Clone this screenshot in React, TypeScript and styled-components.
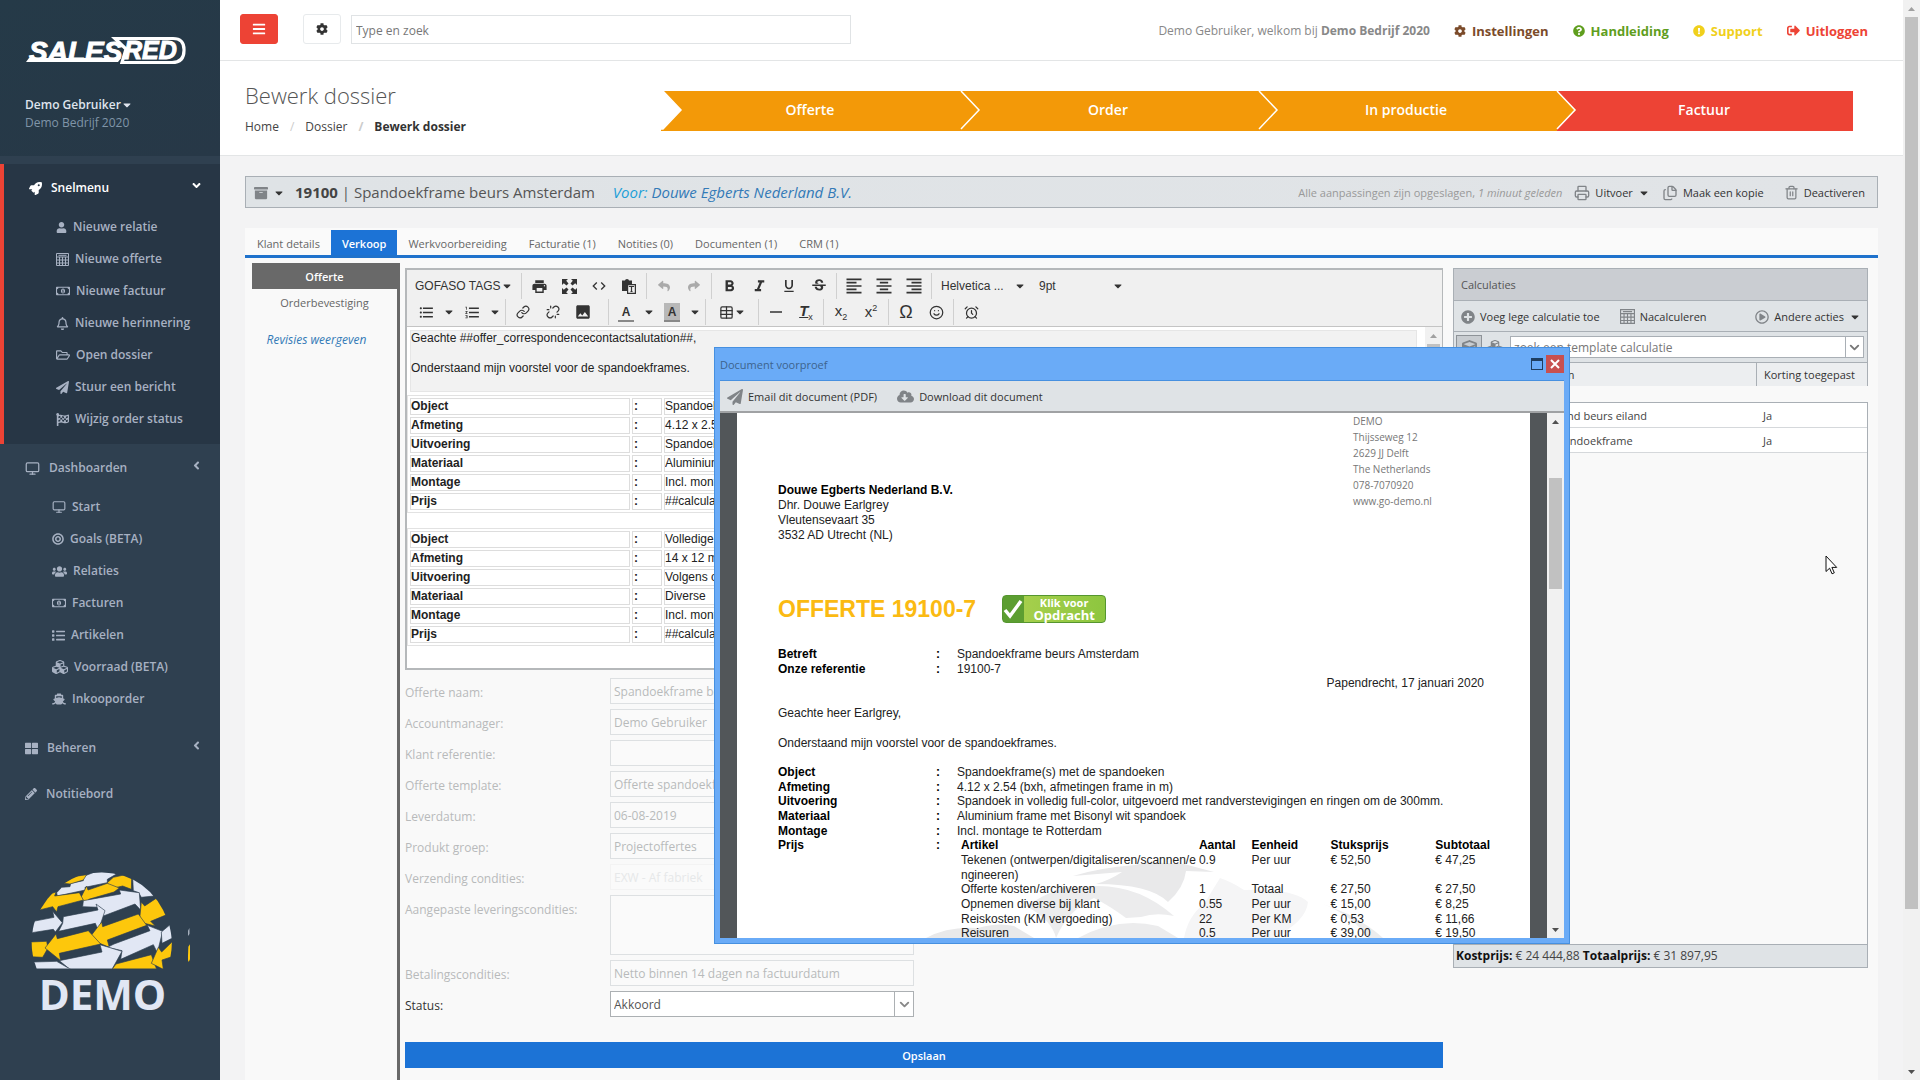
import React from "react";
import styled, { createGlobalStyle, css } from "styled-components";
import {
  FaBars, FaCog, FaQuestionCircle, FaExclamationCircle, FaSignOutAlt, FaRocket, FaUser, FaRegMoneyBillAlt,
  FaRegBell, FaRegFolderOpen, FaPaperPlane, FaFlagCheckered, FaBullseye, FaUsers, FaList, FaCube, FaCubes, FaShip,
  FaThLarge, FaPencilAlt, FaAngleDown, FaAngleLeft, FaArchive, FaPlusCircle, FaRegPlayCircle,
  FaCloudDownloadAlt, FaReply, FaShare, FaCaretDown,
} from "react-icons/fa";
import {
  MdPrint, MdCode, MdFormatBold, MdFormatItalic, MdFormatUnderlined, MdStrikethroughS,
  MdFormatAlignLeft, MdFormatAlignCenter, MdFormatAlignRight, MdFormatListBulleted, MdFormatListNumbered,
  MdImage, MdHorizontalRule,
} from "react-icons/md";
import { Unlink, Table, Smile, AlarmClock, Printer, Files, Trash2, ChevronDown, Monitor, Link } from "lucide-react";

const ui = `"Open Sans", "Noto Sans", sans-serif`;
const doc = `"Liberation Sans", Arial, sans-serif`;

const Global = createGlobalStyle`
  *, *::before, *::after { box-sizing: border-box; }
  body { margin: 0; background: #f3f3f4; color: #555; font: 12px/18px ${ui}; overflow: hidden; }
  button, input, select, textarea { font: inherit; color: inherit; margin: 0; border-radius: 0; }
  button { background: none; border: 0; padding: 0; white-space: nowrap; }
  a { color: inherit; text-decoration: none; }
  h1, h2, p, ul, ol { margin: 0; padding: 0; font-weight: inherit; font-size: inherit; }
  ul, ol { list-style: none; }
  table { border-spacing: 0; text-align: left; }
  svg { flex: none; }
`;

const Page = styled.div`
  display: flex;
  height: 100vh;
  overflow: hidden;
`;

/* ---------- sidebar ---------- */
const Sidebar = styled.nav`
  flex: 0 0 220px;
  background: #2f4050;
  color: #a7b1c2;
  font-weight: 600;
`;
const Profile = styled.div`
  height: 156px;
  padding: 36px 25px 0;
  background: linear-gradient(160deg, #253a48, #273847);
  margin-bottom: 8px;
  svg { display: block; }
`;
const UserName = styled.button`
  display: flex;
  align-items: center;
  margin-top: 30px;
  font-weight: 600;
  color: #dfe4ed;
`;
const Company = styled.div`
  font-weight: 400;
  color: #8095a8;
`;
const Section = styled.li<{ $active?: boolean }>`
  padding-bottom: ${(p) => (p.$active === undefined ? 0 : 10)}px;
  ${(p) => p.$active && css`
    background: #273645;
    box-shadow: inset 4px 0 0 #ed4335;
  `}
`;
const SectionLink = styled.a<{ $active?: boolean }>`
  display: flex;
  align-items: center;
  height: 46px;
  padding: 2px 17px 0 ${(p) => (p.$active ? 29 : 25)}px;
  color: ${(p) => (p.$active ? "#fff" : "inherit")};
  > svg:first-child { margin-right: 9px; }
  > svg:last-child { margin-left: auto; margin-top: -6px; }
`;
const SubLink = styled.a<{ $indent: number }>`
  display: flex;
  align-items: center;
  gap: 6px;
  height: 32px;
  padding: 2px 0 0 ${(p) => p.$indent}px;
`;
const Globe = styled.div`
  padding: 44px 20px;
  svg { display: block; }
`;

/* ---------- top ---------- */
const Main = styled.main`
  flex: 1;
  min-width: 0;
  background: #f3f3f4;
`;
const TopBar = styled.header`
  display: flex;
  align-items: center;
  height: 61px;
  padding: 0 35px 2px 20px;
  background: #fff;
  border-bottom: 1px solid #e3e5e6;
`;
const SquareButton = styled.button<{ $primary?: boolean }>`
  display: grid;
  place-items: center;
  width: 38px;
  height: 30px;
  border-radius: 3px;
  border: 1px solid ${(p) => (p.$primary ? "#ed4335" : "#e7eaec")};
  background: ${(p) => (p.$primary ? "#ed4335" : "#fff")};
  color: ${(p) => (p.$primary ? "#fff" : "#333")};
  margin-right: ${(p) => (p.$primary ? 25 : 10)}px;
`;
const Search = styled.input`
  width: 500px;
  height: 29px;
  padding: 2px 4px 0;
  border: 1px solid #e0e3e5;
  background: #fff;
  &::placeholder { color: #777; opacity: 1; }
`;
const Welcome = styled.span`
  margin-left: auto;
  padding-top: 3px;
  color: #888;
`;
const TopLink = styled.a<{ $color: string }>`
  display: flex;
  align-items: center;
  gap: 6px;
  margin-left: 24px;
  padding-top: 3px;
  font-size: 13px;
  font-weight: 700;
  color: ${(p) => p.$color};
`;
const Heading = styled.section`
  display: grid;
  grid-template-columns: 416px 1fr;
  height: 95px;
  padding: 18px 50px 0 25px;
  background: #fff;
  border-bottom: 1px solid #e3e5e6;
`;
const Title = styled.h1`
  font-size: 22px;
  line-height: 32px;
  font-weight: 300;
  color: #555;
`;
const Crumbs = styled.ol`
  display: flex;
  margin-top: 7px;
  color: #444;
  li + li::before { content: "/"; padding: 0 11px; color: #ccc; }
  li:last-child { font-weight: 700; color: #333; }
`;
const Steps = styled.ol`
  display: grid;
  grid-template-columns: repeat(4, 1fr);
  height: 40px;
  margin-top: 12px;
  color: #fff;
  font-size: 14px;
  font-weight: 600;
`;
const Step = styled.li<{ $bg: string }>`
  display: grid;
  grid-template-columns: 22px 1fr 22px;
  background: ${(p) => p.$bg};
  line-height: 38px;
  text-align: center;
`;

/* ---------- dossier ---------- */
const Content = styled.div`
  padding: 20px 25px 0;
`;
const DossierBar = styled.div`
  display: flex;
  align-items: center;
  height: 32px;
  padding: 0 12px 0 8px;
  border: 1px solid #a9afb5;
  background: linear-gradient(90deg, #dfe3e6, #e1e4e7);
  font-size: 11px;
  color: #333;
`;
const DossierTitle = styled.div`
  margin-left: 10px;
  font-size: 15px;
  color: #555;
  b { color: #444; }
  i { margin-left: 14px; color: #1c9fd8; }
  a { color: #337ab7; }
`;
const Saved = styled.span`
  margin-left: auto;
  padding-top: 1px;
  color: #999;
`;
const BarButton = styled.button<{ $gap?: number }>`
  display: flex;
  align-items: center;
  gap: 5px;
  margin-left: ${(p) => p.$gap ?? 12}px;
  padding-top: 1px;
  font-size: 11px;
  color: #333;
  > svg:first-child { color: #808488; }
`;
const Tabs = styled.div`
  display: flex;
  align-items: flex-end;
  height: 30px;
  margin-top: 20px;
  padding: 0 1px;
  background: #fafafa;
  border-bottom: 3px solid #1f72cc;
  font-size: 11px;
`;
const Tab = styled.button<{ $active?: boolean }>`
  height: 25px;
  padding: 3px 11px 0;
  font-weight: ${(p) => (p.$active ? 600 : 400)};
  background: ${(p) => (p.$active ? "#1c73d6" : "transparent")};
  color: ${(p) => (p.$active ? "#fff" : "#666")};
`;
const Workspace = styled.div`
  display: grid;
  grid-template-columns: 148px minmax(0, 1fr) 415px;
  height: 900px;
  padding: 5px 10px 0 7px;
  background: #f9f9f9;
`;
const SideTabs = styled.div`
  display: flex;
  flex-direction: column;
  border-right: 3px solid #696969;
  font-size: 11px;
  text-align: center;
`;
const SideTab = styled.button<{ $active?: boolean }>`
  height: 26px;
  font-size: 11px;
  margin-right: ${(p) => (p.$active ? -3 : 0)}px;
  padding: 2px ${(p) => (p.$active ? 3 : 0)}px 0 0;
  font-weight: ${(p) => (p.$active ? 600 : 400)};
  background: ${(p) => (p.$active ? "#696969" : "transparent")};
  color: ${(p) => (p.$active ? "#fff" : "#666")};
`;
const Revisions = styled.a`
  margin-top: 16px;
  font-size: 12px;
  padding-right: 16px;
  font-style: italic;
  color: #337ab7;
`;

/* ---------- editor ---------- */
const Center = styled.div`
  padding: 5px 10px 0 5px;
`;
const Editor = styled.div`
  height: 402px;
  border: 2px solid #b5b8ba;
  border-right-width: 1px;
  background: #fff;
  overflow: hidden;
  color: #222;
`;
const Toolbar = styled.div`
  height: 57px;
  padding: 3px 0 0 2px;
  background: #f0f0f0;
  border-bottom: 1px solid #c4c4c4;
  font: 12px/18px ${doc};
  color: #333;
`;
const ToolRow = styled.div`
  display: flex;
  height: 26px;
`;
const ToolGroup = styled.div<{ $end?: number }>`
  display: flex;
  align-items: center;
  padding: 0 ${(p) => p.$end ?? 2}px 0 2px;
  & + & { border-left: 1px solid #d0d0d0; }
`;
const Tool = styled.button<{ $w?: number; $dim?: boolean; $start?: number }>`
  display: flex;
  align-items: center;
  justify-content: ${(p) => (p.$start === undefined ? "center" : "space-between")};
  padding: 0 ${(p) => (p.$start === undefined ? 0 : 6)}px 0 ${(p) => p.$start ?? 0}px;
  width: ${(p) => p.$w ?? 30}px;
  height: 24px;
  color: ${(p) => (p.$dim ? "#aaa" : "#333")};
`;
const Glyph = styled.span<{ $big?: boolean }>`
  font-size: ${(p) => (p.$big ? 18 : 15)}px;
  line-height: 18px;
  sub, sup { font-size: 9px; line-height: 9px; }
  i { font-weight: 700; text-decoration: underline; }
`;
const Letter = styled.span<{ $fill?: boolean }>`
  width: 16px;
  height: 19px;
  font-weight: 700;
  text-align: center;
  border-bottom: 2px solid #888;
  background: ${(p) => (p.$fill ? "#b8b8b8" : "none")};
`;
const EditorBody = styled.div`
  display: flex;
  justify-content: space-between;
  font: 12px/14px ${doc};
`;
const EditorText = styled.div`
  flex: 1;
`;
const Intro = styled.div`
  margin: 3px 8px 3px 3px;
  height: 62px;
  line-height: 15px;
  background: #f2f2f2;
  border: 1px solid #e6e6e6;
`;
const SpecTable = styled.table`
  width: 100%;
  table-layout: fixed;
  border: 1px solid #e2e2e2;
  border-spacing: 2px;
  margin-bottom: 15px;
  td, th { border: 1px solid #ddd; height: 17px; padding: 0; line-height: 15px; overflow: hidden; white-space: nowrap; }
  tr > :nth-child(1) { width: 220px; }
  tr > :nth-child(2) { width: 30px; font-weight: 700; padding-left: 1px; }
`;

/* ---------- form ---------- */
const Form = styled.form`
  display: grid;
  grid-template-columns: 205px 304px;
  row-gap: 5px;
  margin-top: 8px;
  color: #b8babb;
`;
const Label = styled.label<{ $strong?: boolean }>`
  line-height: 29px;
  height: 26px;
  color: ${(p) => (p.$strong ? "#333" : "inherit")};
`;
const fieldStyle = css`
  width: 100%;
  height: 26px;
  padding: 0 3px;
  border: 1px solid #dde0e2;
  background: #fafafa;
`;
const Field = styled.input<{ $faded?: boolean }>`
  ${fieldStyle}
  ${(p) => p.$faded && css`color: #e6e8e9; border-color: #f3f3f3;`}
`;
const Area = styled.textarea`
  ${fieldStyle}
  display: block;
  height: 60px;
  resize: none;
`;
const SelectBox = styled.div`
  display: grid;
  grid-template-columns: 1fr 18px;
  align-items: center;
  height: 26px;
  border: 1px solid #acb0b3;
  background: #fff;
  color: #555;
  svg { grid-area: 1 / 2; justify-self: center; pointer-events: none; }
  select {
    grid-area: 1 / 1 / 2 / 3;
    height: 24px;
    padding: 1px 3px 0;
    border: 0;
    appearance: none;
    background: linear-gradient(#acb0b3, #acb0b3) no-repeat right 18px top / 1px 24px;
  }
`;
const Save = styled.button`
  width: 100%;
  height: 26px;
  margin-top: 25px;
  padding-top: 1px;
  background: #1c73d6;
  color: #fff;
  font-size: 11px;
  font-weight: 600;
`;

/* ---------- calculations ---------- */
const Calc = styled.section`
  display: flex;
  flex-direction: column;
  margin-top: 5px;
  height: 700px;
  font-size: 11px;
  color: #444;
`;
const CalcHead = styled.h2`
  height: 33px;
  padding: 0 7px;
  line-height: 31px;
  border: 1px solid #a9afb5;
  background: #cacdd2;
  color: #555;
`;
const CalcTools = styled.div`
  display: flex;
  align-items: center;
  height: 31px;
  padding: 0 6px 0 7px;
  border: solid #a9afb5;
  border-width: 0 1px 1px;
  background: #dfe3e6;
`;
const CalcSearch = styled.div`
  display: flex;
  align-items: center;
  height: 31px;
  padding: 0 3px 0 2px;
  border: solid #a9afb5;
  border-width: 0 1px 1px;
  background: #dfe3e6;
  font-size: 12px;
`;
const ModeButton = styled.button<{ $on?: boolean }>`
  display: grid;
  place-items: center;
  width: 26px;
  height: 24px;
  color: #808488;
  border: 1px solid ${(p) => (p.$on ? "#8e9398" : "transparent")};
  background: ${(p) => (p.$on ? "#c8ccd0" : "transparent")};
`;
const Combo = styled.div`
  display: flex;
  flex: 1;
  height: 22px;
  margin-left: 2px;
  border: 1px solid #a9afb5;
  background: #fff;
  input { flex: 1; min-width: 0; border: 0; padding: 1px 3px 0; background: none; }
  input::placeholder { color: #777; opacity: 1; }
  button { display: grid; place-items: center; width: 18px; border-left: 1px solid #a9afb5; color: #777; }
`;
const CalcTable = styled.table`
  width: 100%;
  table-layout: fixed;
  tr > :nth-child(1) { width: 90px; }
  tr > :nth-child(3) { width: 111px; }
`;
const HeadTable = styled(CalcTable)`
  height: 23px;
  background: #eceef0;
  border: solid #a9afb5;
  border-width: 0 1px;
  margin-bottom: 16px;
  th { font-weight: 400; padding: 0 0 0 7px; color: #333; }
  th:nth-child(3) { border-left: 1px solid #a9afb5; }
`;
const CalcList = styled.div`
  flex: 1;
  border: 1px solid #a9afb5;
  border-bottom: 0;
  td { height: 25px; padding: 1px 7px 0; background: #fff; border-bottom: 1px solid #d5d8db; }
`;
const Totals = styled.div`
  height: 24px;
  padding: 0 2px;
  font-size: 12px;
  line-height: 22px;
  border: 1px solid #a9afb5;
  background: #dfe3e6;
  b { color: #111; }
`;

/* ---------- preview window ---------- */
const Dialog = styled.section`
  position: absolute;
  left: 714px;
  top: 347px;
  display: flex;
  flex-direction: column;
  width: 856px;
  height: 597px;
  padding: 0 5px 5px;
  border: 1px solid #4690e0;
  background: #6aabf7;
  font-size: 11px;
  color: #333;
`;
const DialogHead = styled.header`
  display: flex;
  align-items: center;
  gap: 3px;
  height: 32px;
  color: #3d638d;
  h2 { flex: 1; padding-top: 1px; }
`;
const MaxButton = styled.button`
  width: 12px;
  height: 12px;
  border: 1px solid #1f3e60;
  border-top-width: 3px;
`;
const CloseButton = styled.button`
  display: grid;
  place-items: center;
  width: 18px;
  height: 18px;
  background: #c75050;
`;
const DialogTools = styled.div`
  display: flex;
  align-items: center;
  height: 33px;
  padding-left: 7px;
  border-top: 1px solid #4690e0;
  border-bottom: 2px solid #a0a2a4;
  background: #dfe3e6;
`;
const Viewer = styled.div`
  display: flex;
  flex: 1;
  min-height: 0;
  padding-left: 17px;
  background: #525659;
`;
const Sheet = styled.article`
  position: relative;
  flex: 1;
  min-width: 0;
  margin-right: 17px;
  padding: 0 40px 0 41px;
  overflow: hidden;
  background: #fff;
  font: 12px/15px ${doc};
  color: #222;
  > * { position: relative; }
  b, th { color: #000; font-weight: 700; }
`;
const Watermark = styled.svg`
  && { position: absolute; }
  left: 181px;
  bottom: 0;
`;
const Sender = styled.address`
  height: 70px;
  padding-left: 575px;
  font: normal 10px/16px ${ui};
  white-space: nowrap;
  color: #777;
`;
const Address = styled.p`
  line-height: 15px;
`;
const OfferRow = styled.div`
  display: flex;
  align-items: center;
  gap: 26px;
  height: 28px;
  margin: 52px 0 24px;
`;
const OfferTitle = styled.h2`
  font-size: 23px;
  line-height: 28px;
  font-weight: 700;
  color: #fbba12;
`;
const OrderButton = styled.button`
  display: flex;
  align-items: center;
  width: 104px;
  height: 28px;
  border: 1px solid #55962f;
  border-radius: 4px;
  background: linear-gradient(90deg, #5c9e31 21px, #a5cf4c 21px, #8dc63f);
  color: #fff;
  font: 700 13px/12px ${ui};
  text-align: center;
  span { flex: 1; }
  small { display: block; font-size: 11px; line-height: 12px; }
`;
const DocTable = styled.table`
  width: 100%;
  line-height: 15px;
  td, th { padding: 0; vertical-align: top; height: 15px; white-space: nowrap; }
  tr:nth-child(3n + 2) > :nth-child(n) { height: 14px; line-height: 14px; }
  tr > :nth-child(1) { width: 158px; }
  tr > :nth-child(2) { width: 21px; font-weight: 700; color: #000; }
`;
const DateLine = styled.p`
  text-align: right;
  padding-right: 6px;
`;
const Letterline = styled.p`
  margin: 15px 0 14px;
`;
const PriceTable = styled.table`
  margin-left: 4px;
  && td, && th { height: 15px; line-height: 15px; }
  &&& tbody tr:nth-child(3n + 2) td { height: 14px; line-height: 14px; }
  && tr > :nth-child(n) { font-weight: 400; color: inherit; }
  && thead tr > :nth-child(n) { font-weight: 700; color: #000; }
  && tr > :nth-child(1) { width: 238px; }
  && tr > :nth-child(2) { width: 53px; }
  && tr > :nth-child(3) { width: 80px; }
  && tr > :nth-child(4) { width: 106px; }
`;

/* ---------- scrollbars ---------- */
const Track = styled.div`
  display: flex;
  flex-direction: column;
  align-items: center;
  flex: 0 0 17px;
  background: #f1f1f1;
`;
const Space = styled.div<{ $h?: number }>`
  flex: ${(p) => (p.$h === undefined ? "1" : `0 0 ${p.$h}px`)};
`;
const Thumb = styled.div<{ $h: number }>`
  width: 13px;
  height: ${(p) => p.$h}px;
  background: #c1c1c1;
`;
const Pointer = styled.svg`
  position: absolute;
  left: 1825px;
  top: 555px;
`;

const Arrow = ({ down, color = "#505050" }: { down?: boolean; color?: string }) => (
  <svg width="17" height="17" viewBox="0 0 17 17">
    <path d={down ? "M5 7h7l-3.500 4z" : "M5 11h7l-3.500-4z"} fill={color} />
  </svg>
);

const CalcIcon = ({ size = 13 }: { size?: number }) => (
  <svg width={size} height={size} viewBox="0 0 13 13" fill="none" stroke="currentColor">
    <path d="M.5.5h12v12H.500zM.500 4h12M.500 7h12M.500 10h12M3.500 4v9M6.500 4v9M9.500 4v9M2.500 2.300h8" />
  </svg>
);

const ExpandIcon = () => (
  <svg width="15" height="15" viewBox="0 0 15 15" fill="#333">
    <path d="M0 0h6L4.200 1.800 6.500 4.500 4.500 6.500 1.800 4.200 0 6zM15 0v6l-1.800-1.800-2.700 2.300-2-2 2.300-2.700L9 0zM0 15V9l1.800 1.800 2.700-2.300 2 2-2.300 2.700L6 15zM15 15H9l1.800-1.800-2.300-2.700 2-2 2.700 2.300L15 9z" />
  </svg>
);

const PasteIcon = () => (
  <svg width="14" height="15" viewBox="0 0 14 15">
    <path d="M0 1.500h3a2 1.500 0 0 1 4 0h3V5H5v7H0z" fill="#333" />
    <path d="M5.600 5.600h7.800v8.800H5.600zM7.500 8V7.500h4V8M9.500 7.500v5M8.500 12.500h2" fill="none" stroke="#333" strokeWidth="1.200" />
  </svg>
);

const Caret = () => <FaCaretDown size={12} />;

const Logo = () => (
  <svg width="162" height="30" viewBox="0 0 162 30" role="img" aria-label="SalesRed">
    <path d="M1 26 L4 22 H96 L93 26Z" fill="#fff" />
    <path d="M90 2.500H148q11 0 11 11v1q0 12-12 12H97L101 13Z" fill="none" stroke="#fff" strokeWidth="3.200" />
    <g fill="#fff" fontFamily="Liberation Sans, Arial, sans-serif" fontWeight="700" fontStyle="italic">
      <text x="4" y="25" fontSize="28" stroke="#fff">SALES</text>
      <text x="99" y="23" fontSize="25" stroke="#fff">RED</text>
    </g>
  </svg>
);

const GlobeLogo = () => (
  <svg width="180" height="164" viewBox="0 0 540 492" role="img" aria-label="Demo">
    <defs>
      <clipPath id="dome"><path d="M50 326Q20 245 48 175Q110 40 245 37Q390 42 445 185Q468 260 440 326Z" /></clipPath>
    </defs>
    <g clipPath="url(#dome)" stroke="#2f4050" strokeWidth="2">
      <path fill="#e1e7f4" d="M110 98L125 82L150 80L152 70L190 62L188 50L240 30L310 30L262 58L262 68L195 82L196 90L112 108Z" />
      <path fill="#fdc70c" d="M130 70L160 50L200 44L190 60L150 72Z" />
      <path fill="#fdc70c" d="M262 68L280 52L325 42L335 54L334 88L308 78L282 84L278 92Z" />
      <path fill="#fdc70c" d="M180 118L200 78L204 90L262 70L298 84L282 96L206 118L208 130Z" />
      <path fill="#fdc70c" d="M50 135L80 105L108 96L104 108L178 98L190 120L114 140L110 156L98 140L50 152Z" />
      <path fill="#e1e7f4" d="M338 52L375 66L402 108L364 112L356 98L340 92Z" />
      <path fill="#e1e7f4" d="M190 122L302 102L298 90L358 98L362 150L345 132L250 168L240 142L188 140Z" />
      <path fill="#fdc70c" d="M358 186L364 126L374 138L416 110L450 160L392 184L406 198Z" />
      <path fill="#e1e7f4" d="M40 184L102 172L98 154L127 188L106 216L100 208L36 218Z" />
      <path fill="#e1e7f4" d="M130 170L234 150L228 132L255 152L235 212L226 190L116 214L128 190Z" />
      <path fill="#fdc70c" d="M206 236L245 186L248 200L355 162L380 196L262 240L268 262Z" />
      <path fill="#e1e7f4" d="M282 252L390 212L382 196L428 214L412 278L400 254L302 298L306 272L262 262Z" />
      <path fill="#fdc70c" d="M28 246L80 244L84 264L68 292L30 290Z" />
      <path fill="#fdc70c" d="M75 264L108 222L112 236L205 212L242 252L118 280L122 302Z" />
      <path fill="#e1e7f4" d="M118 302L246 276L240 254L306 274L276 328H150Z" />
      <path fill="#e1e7f4" d="M40 306L110 304L152 328H40Z" />
      <path fill="#fdc70c" d="M276 328L288 312L394 284L410 328Z" />
      <path fill="#e1e7f4" d="M424 216L455 190L462 232L426 250Z" />
      <path fill="#fdc70c" d="M394 310L415 262L425 276L460 242L456 290L426 300L430 328Z" />
    </g>
    <path fill="#fdc70c" d="M505 260l5-7v45q-7 18-6-10z" />
    <path fill="#e1e7f4" d="M505 212l3-8v18l-3 6z" />
    <text x="56" y="449" fontFamily={ui} fontWeight="700" fontSize="126" fill="#e1e7f4">DEMO</text>
  </svg>
);

const quick = [
  [FaUser, "Nieuwe relatie", 11], [CalcIcon, "Nieuwe offerte", 13], [FaRegMoneyBillAlt, "Nieuwe factuur", 14], [FaRegBell, "Nieuwe herinnering", 13],
  [FaRegFolderOpen, "Open dossier", 14], [FaPaperPlane, "Stuur een bericht", 13], [FaFlagCheckered, "Wijzig order status", 13],
] as const;
const boards = [
  [Monitor, "Start", 14], [FaBullseye, "Goals (BETA)", 12], [FaUsers, "Relaties", 15], [FaRegMoneyBillAlt, "Facturen", 14],
  [FaList, "Artikelen", 13], [FaCubes, "Voorraad (BETA)", 16], [FaShip, "Inkooporder", 14],
] as const;

const specs = [
  ["Spandoekframe(s) met de spandoeken", "4.12 x 2.54 (bxh, afmetingen frame in m)", "Spandoek in volledig full-color", "Aluminium frame met Bisonyl wit spandoek", "Incl. montage te Rotterdam", "##calculation##"],
  ["Volledige beurs eiland", "14 x 12 meter", "Volgens ontwerp", "Diverse", "Incl. montage", "##calculation##"],
];
const specNames = ["Object", "Afmeting", "Uitvoering", "Materiaal", "Montage", "Prijs"];

const fields: [string, string][] = [
  ["Offerte naam:", "Spandoekframe beurs Amsterdam"], ["Accountmanager:", "Demo Gebruiker"], ["Klant referentie:", ""],
  ["Offerte template:", "Offerte spandoekframe"], ["Leverdatum:", "06-08-2019"], ["Produkt groep:", "Projectoffertes"],
  ["Verzending condities:", "EXW - Af fabriek"],
];

const prices = [
  ["Tekenen (ontwerpen/digitaliseren/scannen/e", "0.9", "Per uur", "€ 52,50", "€ 47,25"],
  ["ngineeren)", "", "", "", ""],
  ["Offerte kosten/archiveren", "1", "Totaal", "€ 27,50", "€ 27,50"],
  ["Opnemen diverse bij klant", "0.55", "Per uur", "€ 15,00", "€ 8,25"],
  ["Reiskosten (KM vergoeding)", "22", "Per KM", "€ 0,53", "€ 11,66"],
  ["Reisuren", "0.5", "Per uur", "€ 39,00", "€ 19,50"],
];

const steps: [string, string][] = [["Offerte", "#f39908"], ["Order", "#f39908"], ["In productie", "#f39908"], ["Factuur", "#ed4335"]];

const Split = ({ children, label }: { children: React.ReactNode; label: string }) => (
  <>
    <Tool aria-label={label}>{children}</Tool>
    <Tool $w={16} aria-label={`${label} opties`}><Caret /></Tool>
  </>
);

export default function App() {
  return (
    <Page>
      <Global />
      <Sidebar>
        <Profile>
          <Logo />
          <UserName>Demo Gebruiker<Caret /></UserName>
          <Company>Demo Bedrijf 2020</Company>
        </Profile>
        <ul>
          <Section $active>
            <SectionLink $active href="#snel"><FaRocket size={13} />Snelmenu<FaAngleDown size={13} /></SectionLink>
            {quick.map(([Icon, text, size]) => <SubLink $indent={56} href="#" key={text}><Icon size={size} />{text}</SubLink>)}
          </Section>
          <Section $active={false}>
            <SectionLink href="#dash"><Monitor size={15} />Dashboarden<FaAngleLeft size={13} /></SectionLink>
            {boards.map(([Icon, text, size]) => <SubLink $indent={52} href="#" key={text}><Icon size={size} />{text}</SubLink>)}
          </Section>
          <Section><SectionLink href="#beheren"><FaThLarge size={13} />Beheren<FaAngleLeft size={13} /></SectionLink></Section>
          <Section><SectionLink href="#notities"><FaPencilAlt size={12} /><span>Notitiebord</span></SectionLink></Section>
        </ul>
        <Globe><GlobeLogo /></Globe>
      </Sidebar>

      <Main>
        <TopBar>
          <SquareButton $primary aria-label="Menu"><FaBars size={14} /></SquareButton>
          <SquareButton aria-label="Opties"><FaCog size={12} /></SquareButton>
          <Search aria-label="Zoeken" placeholder="Type en zoek" />
          <Welcome>Demo Gebruiker, welkom bij <b>Demo Bedrijf 2020</b></Welcome>
          <TopLink href="#" $color="#7b4b2a"><FaCog size={12} />Instellingen</TopLink>
          <TopLink href="#" $color="#5f9e1e"><FaQuestionCircle size={12} />Handleiding</TopLink>
          <TopLink href="#" $color="#f0d01c"><FaExclamationCircle size={12} />Support</TopLink>
          <TopLink href="#" $color="#ed4335"><FaSignOutAlt size={13} />Uitloggen</TopLink>
        </TopBar>
        <Heading>
          <div>
            <Title>Bewerk dossier</Title>
            <Crumbs><li><a href="#">Home</a></li><li><a href="#">Dossier</a></li><li>Bewerk dossier</li></Crumbs>
          </div>
          <Steps>
            {steps.map(([name, color], i) => (
              <Step key={name} $bg={color}>
                <svg width="22" height="40" viewBox="0 0 22 40">
                  {i > 0 && <path d="M0 0h2l19 19L2 38v2H0z" fill="#f39908" />}
                  <path d={i ? "M2 0l18 19L2 38" : "M0 0h2l18 19L2 38H0z"} fill={i ? "none" : "#fff"} stroke="#fff" strokeWidth="1.500" />
                </svg>
                {name}
              </Step>
            ))}
          </Steps>
        </Heading>

        <Content>
          <DossierBar>
            <BarButton $gap={0} aria-label="Dossier acties"><FaArchive size={14} /><Caret /></BarButton>
            <DossierTitle><b>19100</b> | Spandoekframe beurs Amsterdam <i>Voor: <a href="#">Douwe Egberts Nederland B.V.</a></i></DossierTitle>
            <Saved>Alle aanpassingen zijn opgeslagen, <i>1 minuut geleden</i></Saved>
            <BarButton><Printer size={16} />Uitvoer<Caret /></BarButton>
            <BarButton><Files size={16} />Maak een kopie</BarButton>
            <BarButton $gap={20}><Trash2 size={15} />Deactiveren</BarButton>
          </DossierBar>
          <Tabs>
            {["Klant details", "Verkoop", "Werkvoorbereiding", "Facturatie (1)", "Notities (0)", "Documenten (1)", "CRM (1)"].map((t) => (
              <Tab key={t} $active={t === "Verkoop"}>{t}</Tab>
            ))}
          </Tabs>
          <Workspace>
            <SideTabs>
              <SideTab $active>Offerte</SideTab>
              <SideTab>Orderbevestiging</SideTab>
              <Revisions href="#">Revisies weergeven</Revisions>
            </SideTabs>

            <Center>
              <Editor>
                <Toolbar>
                  <ToolRow>
                    <ToolGroup><Tool $w={108} $start={4}>GOFASO TAGS<Caret /></Tool></ToolGroup>
                    <ToolGroup>
                      <Tool aria-label="Print"><MdPrint size={17} /></Tool>
                      <Tool aria-label="Volledig scherm"><ExpandIcon /></Tool>
                      <Tool aria-label="Broncode"><MdCode size={16} /></Tool>
                      <Tool aria-label="Plakken"><PasteIcon /></Tool>
                    </ToolGroup>
                    <ToolGroup>
                      <Tool $dim aria-label="Ongedaan maken"><FaReply size={12} /></Tool>
                      <Tool $dim aria-label="Opnieuw"><FaShare size={12} /></Tool>
                    </ToolGroup>
                    <ToolGroup>
                      <Tool aria-label="Vet"><MdFormatBold size={19} /></Tool>
                      <Tool aria-label="Cursief"><MdFormatItalic size={19} /></Tool>
                      <Tool aria-label="Onderstrepen"><MdFormatUnderlined size={16} /></Tool>
                      <Tool aria-label="Doorhalen"><MdStrikethroughS size={18} /></Tool>
                    </ToolGroup>
                    <ToolGroup>
                      <Tool aria-label="Links"><MdFormatAlignLeft size={20} /></Tool>
                      <Tool aria-label="Midden"><MdFormatAlignCenter size={20} /></Tool>
                      <Tool aria-label="Rechts"><MdFormatAlignRight size={20} /></Tool>
                    </ToolGroup>
                    <ToolGroup>
                      <Tool $w={98} $start={7}>Helvetica ...<Caret /></Tool>
                      <Tool $w={98} $start={7}>9pt<Caret /></Tool>
                    </ToolGroup>
                  </ToolRow>
                  <ToolRow>
                    <ToolGroup>
                      <Split label="Lijst"><MdFormatListBulleted size={17} /></Split>
                      <Split label="Genummerde lijst"><MdFormatListNumbered size={17} /></Split>
                    </ToolGroup>
                    <ToolGroup $end={10}>
                      <Tool aria-label="Link"><Link size={14} /></Tool>
                      <Tool aria-label="Link verwijderen"><Unlink size={14} /></Tool>
                      <Tool aria-label="Afbeelding"><MdImage size={18} /></Tool>
                    </ToolGroup>
                    <ToolGroup $end={2}>
                      <Split label="Tekstkleur"><Letter>A</Letter></Split>
                      <Split label="Achtergrondkleur"><Letter $fill>A</Letter></Split>
                    </ToolGroup>
                    <ToolGroup>
                      <Tool $w={48} aria-label="Tabel"><Table size={15} /><Caret /></Tool>
                    </ToolGroup>
                    <ToolGroup>
                      <Tool aria-label="Lijn"><MdHorizontalRule size={18} /></Tool>
                      <Tool aria-label="Opmaak wissen"><Glyph><i>T</i><sub>x</sub></Glyph></Tool>
                    </ToolGroup>
                    <ToolGroup>
                      <Tool><Glyph>x<sub>2</sub></Glyph></Tool>
                      <Tool><Glyph>x<sup>2</sup></Glyph></Tool>
                    </ToolGroup>
                    <ToolGroup>
                      <Tool><Glyph $big>Ω</Glyph></Tool>
                      <Tool aria-label="Emoji"><Smile size={15} /></Tool>
                    </ToolGroup>
                    <ToolGroup><Tool aria-label="Tijd"><AlarmClock size={15} /></Tool></ToolGroup>
                  </ToolRow>
                </Toolbar>
                <EditorBody>
                  <EditorText>
                    <Intro>Geachte ##offer_correspondencecontactsalutation##,<br /><br />Onderstaand mijn voorstel voor de spandoekframes.</Intro>
                    {specs.map((values, t) => (
                      <SpecTable key={t}><tbody>
                        {values.map((v, i) => <tr key={i}><th>{specNames[i]}</th><td>:</td><td>{v}</td></tr>)}
                      </tbody></SpecTable>
                    ))}
                  </EditorText>
                  <Track><Arrow color="#a0a0a0" /><Thumb $h={180} /><Space /></Track>
                </EditorBody>
              </Editor>

              <Form>
                {fields.map(([label, value], i) => (
                  <React.Fragment key={label}>
                    <Label htmlFor={`f${i}`}>{label}</Label>
                    <Field id={`f${i}`} defaultValue={value} readOnly $faded={i === 6} />
                  </React.Fragment>
                ))}
                <Label htmlFor="lev">Aangepaste leveringscondities:</Label>
                <Area id="lev" readOnly />
                <Label htmlFor="bet">Betalingscondities:</Label>
                <Field id="bet" readOnly defaultValue="Netto binnen 14 dagen na factuurdatum" />
                <Label $strong htmlFor="status">Status:</Label>
                <SelectBox>
                  <select id="status"><option>Akkoord</option></select>
                  <ChevronDown size={15} strokeWidth={3} color="#888" />
                </SelectBox>
              </Form>
              <Save>Opslaan</Save>
            </Center>

            <Calc>
              <CalcHead>Calculaties</CalcHead>
              <CalcTools>
                <BarButton $gap={0}><FaPlusCircle size={14} />Voeg lege calculatie toe</BarButton>
                <BarButton $gap={20}><CalcIcon size={15} />Nacalculeren</BarButton>
                <Space />
                <BarButton><FaRegPlayCircle size={14} />Andere acties<Caret /></BarButton>
              </CalcTools>
              <CalcSearch>
                <ModeButton $on aria-label="Product"><FaCube size={15} /></ModeButton>
                <ModeButton aria-label="Producten"><FaCubes size={16} /></ModeButton>
                <Combo>
                  <input aria-label="Template calculatie" placeholder="zoek een template calculatie" />
                  <button aria-label="Openen"><ChevronDown size={15} strokeWidth={3} /></button>
                </Combo>
              </CalcSearch>
              <HeadTable as="table"><thead><tr><th /><th>Item</th><th>Korting toegepast</th></tr></thead></HeadTable>
              <CalcList>
                <CalcTable><tbody>
                  <tr><td /><td>Stand beurs eiland</td><td>Ja</td></tr>
                  <tr><td /><td>Spandoekframe</td><td>Ja</td></tr>
                </tbody></CalcTable>
              </CalcList>
              <Totals><b>Kostprijs:</b> € 24 444,88 <b>Totaalprijs:</b> € 31 897,95</Totals>
            </Calc>
          </Workspace>
        </Content>
      </Main>

      <Track><Arrow color="#a0a0a0" /><Thumb $h={892} /><Space /><Arrow down /></Track>

      <Dialog role="dialog" aria-label="Document voorproef">
        <DialogHead>
          <h2>Document voorproef</h2>
          <MaxButton aria-label="Maximaliseren" />
          <CloseButton aria-label="Sluiten">
            <svg width="10" height="10" viewBox="0 0 10 10" stroke="#fff" strokeWidth="2"><path d="M1 1l8 8M9 1l-8 8" /></svg>
          </CloseButton>
        </DialogHead>
        <DialogTools>
          <BarButton $gap={0}><FaPaperPlane size={16} />Email dit document (PDF)</BarButton>
          <BarButton $gap={20}><FaCloudDownloadAlt size={17} />Download dit document</BarButton>
        </DialogTools>
        <Viewer>
          <Sheet>
            <Watermark width="520" height="78" viewBox="-120 0 520 78">
              <path fill="#e9e9ea" d="M35 16Q60 8 97 5L110 2L146 4L176 12L148 11Q146 28 130 42Q112 24 58 24Q72 20 84 12Z" />
              <path fill="#ececed" d="M-12 46Q4 36 22 28L55 26Q100 24 136 56Q118 52 103 57L88 58Q72 46 56 38Q30 50 18 78Q14 60-12 46Z" />
              <path fill="#e9e9ea" d="M-112 78Q-90 66-60 68Q-40 62-24 66L-4 78Z" />
              <path fill="#ececed" d="M40 78Q80 56 120 66L140 78Z" />
              <path fill="#f5f5f6" d="M146 78Q150 56 166 44L182 18Q194 22 206 30Q255 28 270 42Q268 62 235 78Z" />
              <path fill="#ececed" d="M285 44L310 54Q332 66 345 78H330Q315 56 285 44Z" />
            </Watermark>
            <Sender>DEMO<br />Thijsseweg 12<br />2629 JJ Delft<br />The Netherlands<br />078-7070920<br />www.go-demo.nl</Sender>
            <Address><b>Douwe Egberts Nederland B.V.</b><br />Dhr. Douwe Earlgrey<br />Vleutensevaart 35<br />3532 AD Utrecht (NL)</Address>
            <OfferRow>
              <OfferTitle>OFFERTE 19100-7</OfferTitle>
              <OrderButton>
                <svg width="20" height="20" viewBox="0 0 20 20" fill="none" stroke="#fff" strokeWidth="3.500"><path d="M2 11l5 6L18 2" /></svg>
                <span><small>Klik voor</small>Opdracht</span>
              </OrderButton>
            </OfferRow>
            <DocTable><tbody>
              <tr><th>Betreft</th><td>:</td><td>Spandoekframe beurs Amsterdam</td></tr>
              <tr><th>Onze referentie</th><td>:</td><td>19100-7</td></tr>
            </tbody></DocTable>
            <DateLine>Papendrecht, 17 januari 2020</DateLine>
            <Letterline>Geachte heer Earlgrey,</Letterline>
            <Letterline>Onderstaand mijn voorstel voor de spandoekframes.</Letterline>
            <DocTable><tbody>
              <tr><th>Object</th><td>:</td><td>Spandoekframe(s) met de spandoeken</td></tr>
              <tr><th>Afmeting</th><td>:</td><td>4.12 x 2.54 (bxh, afmetingen frame in m)</td></tr>
              <tr><th>Uitvoering</th><td>:</td><td>Spandoek in volledig full-color, uitgevoerd met randverstevigingen en ringen om de 300mm.</td></tr>
              <tr><th>Materiaal</th><td>:</td><td>Aluminium frame met Bisonyl wit spandoek</td></tr>
              <tr><th>Montage</th><td>:</td><td>Incl. montage te Rotterdam</td></tr>
              <tr><th>Prijs</th><td>:</td><td>
                <PriceTable>
                  <thead><tr><th>Artikel</th><th>Aantal</th><th>Eenheid</th><th>Stuksprijs</th><th>Subtotaal</th></tr></thead>
                  <tbody>{prices.map((r) => <tr key={r[0]}>{r.map((c, i) => <td key={i}>{c}</td>)}</tr>)}</tbody>
                </PriceTable>
              </td></tr>
            </tbody></DocTable>
          </Sheet>
          <Track><Arrow /><Space $h={48} /><Thumb $h={111} /><Space /><Arrow down /></Track>
        </Viewer>
      </Dialog>

      <Pointer width="13" height="20" viewBox="0 0 13 20"><path d="M1 1v15.500l3.600-3.300 2.400 5.600 2.300-1-2.400-5.400h4.800z" fill="#fff" stroke="#111" /></Pointer>
    </Page>
  );
}
